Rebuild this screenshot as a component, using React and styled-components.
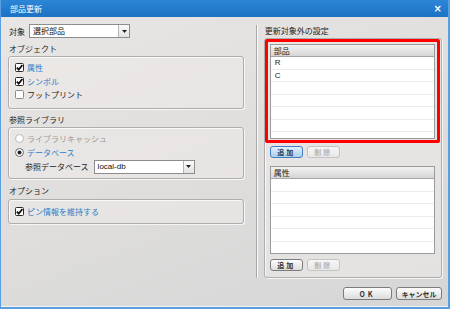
import React from 'react';
import styled, { createGlobalStyle, css } from 'styled-components';

const GlobalStyle = createGlobalStyle`
  html, body {
    margin: 0;
    padding: 0;
    background: #ffffff;
  }
  body {
    font-family: "Noto Sans CJK JP", "Liberation Sans", sans-serif;
    font-size: 8px;
    color: #222222;
  }
`;

const Window = styled.div`
  width: 450px;
  height: 309px;
  box-sizing: border-box;
  display: flex;
  flex-direction: column;
  border-left: 1px solid #5a9fe0;
  border-right: 2px solid #5a9fe0;
  border-bottom: 2px solid #5a9fe0;
  background: linear-gradient(160deg, #e9e7e5 0%, #dedddc 55%, #d6d6d6 100%);
  overflow: hidden;
`;

const TitleBar = styled.div`
  height: 17px;
  flex: none;
  display: flex;
  align-items: center;
  justify-content: space-between;
  padding: 0 6px 0 9px;
  background: linear-gradient(180deg, #2c86d6 0%, #1c72c4 100%);
  color: #ffffff;
  font-size: 8px;
`;

const CloseGlyph = styled.span`
  font-family: "DejaVu Sans", sans-serif;
  font-size: 10px;
  font-weight: bold;
  line-height: 1;
`;

const Body = styled.div`
  flex: 1;
  display: flex;
  flex-direction: column;
  padding: 7px 6px 0 7px;
  border-bottom: 1px solid #f4f2f0;
`;

const Columns = styled.div`
  display: flex;
  align-items: flex-start;
`;

const LeftColumn = styled.div`
  width: 238px;
  display: flex;
  flex-direction: column;
`;

const Separator = styled.div`
  width: 1px;
  height: 253px;
  margin: 1px 6px 0 12px;
  background: #a8a8a8;
  border-right: 1px solid #fafafa;
`;

const RightColumn = styled.div`
  width: 180px;
  display: flex;
  flex-direction: column;
`;

const TargetRow = styled.div`
  display: flex;
  align-items: center;
  gap: 4px;
  height: 14px;
  padding-left: 1px;
`;

const SectionTitle = styled.div`
  height: 12px;
  line-height: 12px;
  padding-left: 1px;
  margin-top: ${p => p.$top}px;
  margin-bottom: ${p => p.$bottom}px;
`;

const Group = styled.div`
  box-sizing: border-box;
  height: ${p => p.$height}px;
  border: 1px solid #aeaeae;
  border-radius: 3px;
  box-shadow: inset 1px 1px 0 #f8f8f8, 1px 1px 0 #f6f6f6;
  background: rgba(236, 234, 232, 0.6);
  padding: ${p => p.$padding || '4px 6px'};
  display: flex;
  flex-direction: column;
`;

const OptionRow = styled.div`
  display: flex;
  align-items: center;
  gap: 3px;
  height: 13.5px;
  color: ${p => (p.$tone === 'blue' ? '#2f7cc8' : p.$tone === 'gray' ? '#9a9a9a' : '#222222')};
`;

const SubRow = styled.div`
  display: flex;
  align-items: center;
  gap: 5px;
  height: 15px;
  padding-left: 10px;
`;

const SelectBox = styled.div`
  box-sizing: border-box;
  width: ${p => p.$width}px;
  height: 14px;
  display: flex;
  border: 1px solid #8c8c8c;
  background: #ffffff;
  font-family: ${p => (p.$latin ? '"Liberation Sans", sans-serif' : 'inherit')};
`;

const SelectValue = styled.div`
  flex: 1;
  padding-left: 3px;
  line-height: 12px;
  color: #111111;
`;

const SelectArrow = styled.div`
  width: 10px;
  border-left: 1px solid #b4b4b4;
  background: linear-gradient(180deg, #fbfbfb, #e2e2e2);
  display: flex;
  align-items: center;
  justify-content: center;
`;

const ListWrap = styled.div`
  position: relative;
  ${p =>
    p.$highlight &&
    css`
      &::after {
        content: '';
        position: absolute;
        left: -5px;
        right: -5px;
        top: -5px;
        bottom: -4px;
        border: 3px solid #ff0000;
        border-radius: 2px;
        pointer-events: none;
      }
    `}
`;

const List = styled.div`
  box-sizing: border-box;
  height: ${p => p.$height}px;
  border: 1px solid #9a9a9a;
  background: #ffffff;
  overflow: hidden;
`;

const ListHeader = styled.div`
  height: 11px;
  line-height: 11px;
  padding-left: 3px;
  background: linear-gradient(180deg, #f2f2f2, #d6d6d6);
  border-bottom: 1px solid #a6a6a6;
  color: #222222;
`;

const ListRow = styled.div`
  height: 12.5px;
  line-height: 12px;
  padding-left: 4px;
  box-sizing: border-box;
  border-bottom: 1px solid #ececec;
  font-family: "Liberation Sans", sans-serif;
  color: #222222;
`;

const ButtonRow = styled.div`
  display: flex;
  gap: 4px;
  margin-top: ${p => p.$top}px;
  margin-bottom: ${p => p.$bottom || 0}px;
`;

const Button = styled.div`
  box-sizing: border-box;
  width: ${p => p.$width}px;
  height: ${p => p.$height || 12}px;
  display: flex;
  align-items: center;
  justify-content: center;
  border-radius: 3px;
  font-size: 7px;
  font-weight: bold;
  letter-spacing: ${p => p.$spacing || 0}px;
  border: 1px solid #7c7c7c;
  background: linear-gradient(180deg, #fdfdfd 0%, #ececec 50%, #dcdcdc 100%);
  color: #333333;
  ${p =>
    p.$active &&
    css`
      border-color: #3d7fbf;
      background: linear-gradient(180deg, #e4f1fb 0%, #c3ddf3 55%, #aacfee 100%);
      color: #1f3d5c;
    `}
  ${p =>
    p.$disabled &&
    css`
      border-color: #c4c4c4;
      background: linear-gradient(180deg, #f6f6f6, #e8e8e8);
      color: #b4b4b4;
    `}
`;

const Footer = styled.div`
  display: flex;
  justify-content: flex-end;
  gap: 4px;
  margin-top: 9px;
`;

function CheckBox({ checked }) {
  return (
    <svg width="9" height="9" viewBox="0 0 9 9">
      <rect x="0.5" y="0.5" width="8" height="8" rx="1" fill="#ffffff" stroke={checked ? '#2a2a2a' : '#8a8a8a'} />
      {checked && <path d="M1.8 4.6 L3.7 6.6 L7.4 2" fill="none" stroke="#111111" strokeWidth="1.8" />}
    </svg>
  );
}

function Radio({ checked, disabled }) {
  return (
    <svg width="9" height="9" viewBox="0 0 9 9">
      <circle cx="4.5" cy="4.5" r="4" fill="#ffffff" stroke={disabled ? '#b8b8b8' : '#6a6a6a'} />
      {checked && <circle cx="4.5" cy="4.5" r="2" fill="#222222" />}
    </svg>
  );
}

function DownArrow() {
  return (
    <svg width="5" height="3" viewBox="0 0 5 3">
      <path d="M0 0 L5 0 L2.5 3 Z" fill="#222222" />
    </svg>
  );
}

function Select({ width, value, latin }) {
  return (
    <SelectBox $width={width} $latin={latin}>
      <SelectValue>{value}</SelectValue>
      <SelectArrow>
        <DownArrow />
      </SelectArrow>
    </SelectBox>
  );
}

function ItemList({ title, rows, height, highlight }) {
  const filler = Array.from({ length: 8 - rows.length }, (_, i) => i);
  return (
    <ListWrap $highlight={highlight}>
      <List $height={height}>
        <ListHeader>{title}</ListHeader>
        {rows.map(r => (
          <ListRow key={r}>{r}</ListRow>
        ))}
        {filler.map(i => (
          <ListRow key={'f' + i} />
        ))}
      </List>
    </ListWrap>
  );
}

export default function App() {
  return (
    <>
      <GlobalStyle />
      <Window>
        <TitleBar>
          <span>部品更新</span>
          <CloseGlyph>×</CloseGlyph>
        </TitleBar>
        <Body>
          <Columns>
            <LeftColumn>
              <TargetRow>
                対象
                <Select width={101} value="選択部品" />
              </TargetRow>
              <SectionTitle $top={5} $bottom={1}>オブジェクト</SectionTitle>
              <Group $height={53}>
                <OptionRow $tone="blue">
                  <CheckBox checked />
                  属性
                </OptionRow>
                <OptionRow $tone="blue">
                  <CheckBox checked />
                  シンボル
                </OptionRow>
                <OptionRow>
                  <CheckBox />
                  フットプリント
                </OptionRow>
              </Group>
              <SectionTitle $top={5} $bottom={1}>参照ライブラリ</SectionTitle>
              <Group $height={52}>
                <OptionRow $tone="gray">
                  <Radio disabled />
                  ライブラリキャッシュ
                </OptionRow>
                <OptionRow $tone="blue">
                  <Radio checked />
                  データベース
                </OptionRow>
                <SubRow>
                  参照データベース
                  <Select width={101} value="local-db" latin />
                </SubRow>
              </Group>
              <SectionTitle $top={6} $bottom={2}>オプション</SectionTitle>
              <Group $height={25} $padding="5px 6px">
                <OptionRow $tone="blue">
                  <CheckBox checked />
                  ピン情報を維持する
                </OptionRow>
              </Group>
            </LeftColumn>
            <Separator />
            <RightColumn>
              <SectionTitle $top={1} $bottom={1}>更新対象外の設定</SectionTitle>
              <Group $height={240} $padding="5px 6px 0 5px">
                <ItemList title="部品" rows={['R', 'C']} height={95} highlight />
                <ButtonRow $top={7} $bottom={8}>
                  <Button $width={33} $spacing={2} $active>追加</Button>
                  <Button $width={33} $spacing={2} $disabled>削除</Button>
                </ButtonRow>
                <ItemList title="属性" rows={[]} height={88} />
                <ButtonRow $top={5}>
                  <Button $width={33} $spacing={2}>追加</Button>
                  <Button $width={33} $spacing={2} $disabled>削除</Button>
                </ButtonRow>
              </Group>
            </RightColumn>
          </Columns>
          <Footer>
            <Button $width={49} $height={13} $spacing={3}>OK</Button>
            <Button $width={46} $height={13}>キャンセル</Button>
          </Footer>
        </Body>
      </Window>
    </>
  );
}
